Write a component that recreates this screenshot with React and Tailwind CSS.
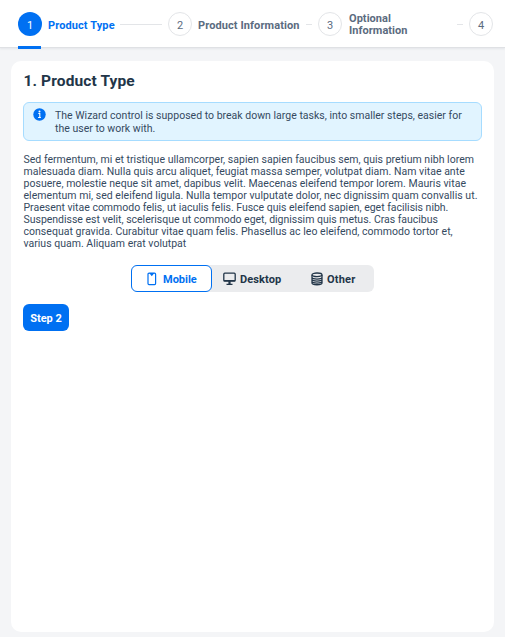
const paragraph = [
  { text: 'Sed fermentum, mi et tristique ullamcorper, sapien sapien faucibus sem, quis pretium nibh lorem', tracking: 'tracking-[0.02px]' },
  { text: 'malesuada diam. Nulla quis arcu aliquet, feugiat massa semper, volutpat diam. Nam vitae ante', tracking: 'tracking-[0.02px]' },
  { text: 'posuere, molestie neque sit amet, dapibus velit. Maecenas eleifend tempor lorem. Mauris vitae', tracking: 'tracking-[0.03px]' },
  { text: 'elementum mi, sed eleifend ligula. Nulla tempor vulputate dolor, nec dignissim quam convallis ut.', tracking: 'tracking-[0.035px]' },
  { text: 'Praesent vitae commodo felis, ut iaculis felis. Fusce quis eleifend sapien, eget facilisis nibh.', tracking: 'tracking-[-0.01px]' },
  { text: 'Suspendisse est velit, scelerisque ut commodo eget, dignissim quis metus. Cras faucibus', tracking: 'tracking-[-0.015px]' },
  { text: 'consequat gravida. Curabitur vitae quam felis. Phasellus ac leo eleifend, commodo tortor et,', tracking: 'tracking-[0.03px]' },
  { text: 'varius quam. Aliquam erat volutpat', tracking: 'tracking-[0.01px]' },
];

function StepCircle({ number, active }) {
  return (
    <span
      className={
        active
          ? 'flex size-6 shrink-0 items-center justify-center rounded-full bg-[#0070f2] pt-[3px] text-[11px] text-white'
          : 'flex size-6 shrink-0 items-center justify-center rounded-full border border-[#e3e5e8] bg-white pt-[3px] text-[11px] text-[#5b6b80]'
      }
    >
      {number}
    </span>
  );
}

function WizardHeader() {
  return (
    <header className="flex h-12 w-full shrink-0 items-center border-b border-[#dfe1e4] bg-white pl-[18px] text-[11px] leading-3 font-bold text-[#5b6b80] shadow-[0_1px_2px_rgba(34,53,72,0.08)]">
      <div className="flex h-12 w-[150px] shrink-0 items-center text-[#0070f2]">
        <div className="relative flex h-12 items-center pt-px font-normal">
          <StepCircle number="1" active />
          <span className="absolute -bottom-px left-0 h-[3px] w-[23px] bg-[#0070f2]" />
        </div>
        <span className="ml-1.5 pt-[4px] tracking-[0.1px] whitespace-nowrap">Product Type</span>
        <span className="mt-px mr-1.5 ml-auto h-px w-[42px] bg-[#e3e5e8]" />
      </div>
      <div className="flex w-[150px] shrink-0 items-center">
        <div className="pt-px font-normal"><StepCircle number="2" /></div>
        <span className="ml-1.5 pt-[4px] tracking-[0.1px] whitespace-nowrap">Product Information</span>
        <span className="mt-px mr-1.5 ml-auto h-px w-1.5 bg-[#e3e5e8]" />
      </div>
      <div className="flex w-[151px] shrink-0 items-center">
        <div className="pt-px font-normal"><StepCircle number="3" /></div>
        <span className="ml-[7px] pt-[2px] tracking-[0.05px]">Optional<br />Information</span>
        <span className="mt-px mr-1.5 ml-auto h-px w-1.5 bg-[#e3e5e8]" />
      </div>
      <div className="pt-px font-normal"><StepCircle number="4" /></div>
    </header>
  );
}

function MessageStrip() {
  return (
    <div className="mt-[9px] flex h-[39px] rounded-md border border-[#a6dcff] bg-[#e1f4ff] pt-[6px] pl-[9px]">
      <svg className="-mt-px size-[13px]" viewBox="0 0 13 13">
        <circle cx="6.5" cy="6.5" r="6.2" fill="#0070f2" />
        <circle cx="6.5" cy="3.5" r="1" fill="#fff" />
        <path d="M5.3 5.5h1.5v4M5.1 9.5h2.8" fill="none" stroke="#fff" strokeWidth="1.1" />
      </svg>
      <p className="ml-[9px] text-[10.5px] leading-[13px] tracking-[0.01px] whitespace-nowrap text-[#354a5f]">
        The Wizard control is supposed to break down large tasks, into smaller steps, easier for
        <br />
        the user to work with.
      </p>
    </div>
  );
}

function MobileIcon() {
  return (
    <svg className="h-[14px] w-[10px]" viewBox="0 0 10 14" fill="none" stroke="currentColor" strokeWidth="1.2">
      <rect x="1" y="1.2" width="7.6" height="11.4" rx="1" />
      <path d="M3.4 1.5h2.8L4.8 3.3z" fill="currentColor" />
    </svg>
  );
}

function DesktopIcon() {
  return (
    <svg className="h-[14px] w-[13px]" viewBox="0 0 13 14" fill="none" stroke="currentColor" strokeWidth="1.3">
      <rect x="0.8" y="1.2" width="11.4" height="8" rx="1" />
      <path d="M1 8.6h11M3.5 12.3h6" />
      <path d="M6.5 9v3" strokeWidth="2.2" />
    </svg>
  );
}

function DatabaseIcon() {
  return (
    <svg className="h-[14px] w-[12px]" viewBox="0 0 12 14" fill="none" stroke="currentColor" strokeWidth="1.3">
      <ellipse cx="6" cy="2.8" rx="5" ry="1.8" />
      <path d="M1 3v8c0 2.3 10 2.3 10 0V3M1 5.3c0 2.3 10 2.3 10 0M1 7.3c0 2.3 10 2.3 10 0M1 9.3c0 2.3 10 2.3 10 0" />
    </svg>
  );
}

function SegmentedButton() {
  return (
    <div className="mx-auto mt-[15px] flex h-[27px] w-[243px] rounded-md bg-[#ebecee] text-[11px] font-bold">
      <button className="flex w-[81px] items-center rounded-md border border-[#0070f2] bg-white pl-[15px] text-[#0070f2]">
        <MobileIcon /><span className="ml-[6px] pt-[3px]">Mobile</span>
      </button>
      <button className="flex w-[81px] items-center pl-[11px]">
        <DesktopIcon /><span className="ml-[4px] pt-[3px] tracking-[0.1px]">Desktop</span>
      </button>
      <button className="flex w-[81px] items-center pl-[18px]">
        <DatabaseIcon /><span className="ml-[4px] pt-[3px] tracking-[0.2px]">Other</span>
      </button>
    </div>
  );
}

export default function App() {
  return (
    <div className="flex h-[637px] w-[505px] flex-col overflow-hidden bg-[#f4f5f7] font-['Roboto',sans-serif] text-[#223548]">
      <WizardHeader />
      <main className="mx-[11px] mt-[13px] mb-[5px] flex-1 rounded-[10px] bg-white px-3 pt-[9px]">
        <div className="w-[459px]">
          <h1 className="pl-[0.5px] text-[15.5px] leading-[23px] font-bold tracking-[0.12px]">1. Product Type</h1>
          <MessageStrip />
          <div className="mt-[12.5px] pl-[0.5px] text-[10.5px] leading-[12.1px] whitespace-nowrap text-[#354a5f]">
            {paragraph.map(({ text, tracking }) => <p key={text} className={tracking}>{text}</p>)}
          </div>
          <SegmentedButton />
          <button className="mt-3 flex h-[27px] w-[46px] items-center justify-center rounded-md bg-[#0070f2] pt-[3px] text-[11px] font-bold text-white">
            Step 2
          </button>
        </div>
      </main>
    </div>
  );
}
